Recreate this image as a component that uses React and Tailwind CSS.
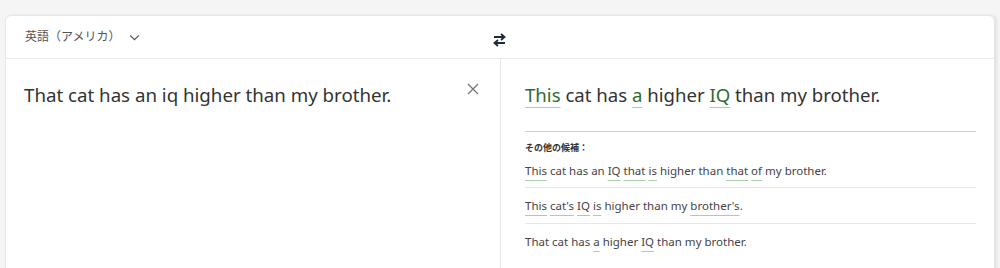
import React from "react";

const font = { fontFamily: '"Segoe UI", "Noto Sans", "Noto Sans CJK JP", sans-serif' };

function G({ children, big }) {
  return (
    <span
      className={
        big
          ? "text-[#2f6b30] underline decoration-[#a9cfa9] decoration-1 underline-offset-[5px]"
          : "underline decoration-[#a9cfa9] decoration-1 underline-offset-[5px]"
      }
    >
      {children}
    </span>
  );
}

export default function App() {
  return (
    <div className="w-[1000px] h-[268px] bg-[#f5f5f5] overflow-hidden pt-[15px] pl-[5px]" style={font}>
      <div className="w-[990px] h-[260px] bg-white rounded-t-[6px] border border-[#e6e6e6] shadow-[2px_0_3px_rgba(0,0,0,0.08)] flex flex-col">
        <div className="h-[43px] flex items-center border-b border-[#ececec] relative">
          <div className="flex items-center pl-[19px] text-[12px] text-[#555] gap-[9px]">
            <span>英語（アメリカ）</span>
            <svg width="11" height="7" viewBox="0 0 12 8" fill="none" stroke="#555" strokeWidth="1.4">
              <path d="M1 1.5 L6 6.5 L11 1.5" />
            </svg>
          </div>
          <div className="absolute left-[487px] top-[17px]">
            <svg width="13" height="14" viewBox="0 0 13 14" fill="none" stroke="#1e2b3c" strokeWidth="2">
              <path d="M1 4 H11" />
              <path d="M8 1 L11.5 4 L8 7" strokeWidth="1.8" />
              <path d="M12 10 H2" />
              <path d="M5 7 L1.5 10 L5 13" strokeWidth="1.8" />
            </svg>
          </div>
        </div>
        <div className="flex flex-1">
          <div className="w-[494px] flex items-start justify-between pl-[18px] pr-[21px] pt-[20px]">
            <div className="text-[18.7px] text-[#333] leading-[32px]">That cat has an iq higher than my brother.</div>
            <svg className="mt-[4px]" width="12" height="12" viewBox="0 0 12 12" stroke="#777" strokeWidth="1.3">
              <path d="M1 1 L11 11 M11 1 L1 11" />
            </svg>
          </div>
          <div className="flex-1 border-l border-[#e6e6e6] pl-[24px] pr-[18px]">
            <div className="pt-[20px] text-[18.6px] text-[#333] leading-[32px] pb-[20px] border-b border-[#cfcfcf]">
              <G big>This</G> cat has <G big>a</G> higher <G big>IQ</G> than my brother.
            </div>
            <div className="text-[9px] font-bold text-[#333] mt-[10px] leading-[12px]">その他の候補：</div>
            <div className="text-[11.5px] text-[#444] leading-[20px]">
              <div className="pt-[7px] pb-[6px] border-b border-[#e8e8e8]">
                <G>This</G> cat has an <G>IQ</G> <G>that</G> <G>is</G> higher than <G>that</G> <G>of</G> my brother.
              </div>
              <div className="pt-[8px] pb-[7px] border-b border-[#e8e8e8]">
                <G>This</G> <G>cat's</G> <G>IQ</G> <G>is</G> higher than my <G>brother's</G>.
              </div>
              <div className="pt-[8px]">
                That cat has <G>a</G> higher <G>IQ</G> than my brother.
              </div>
            </div>
          </div>
        </div>
      </div>
    </div>
  );
}
